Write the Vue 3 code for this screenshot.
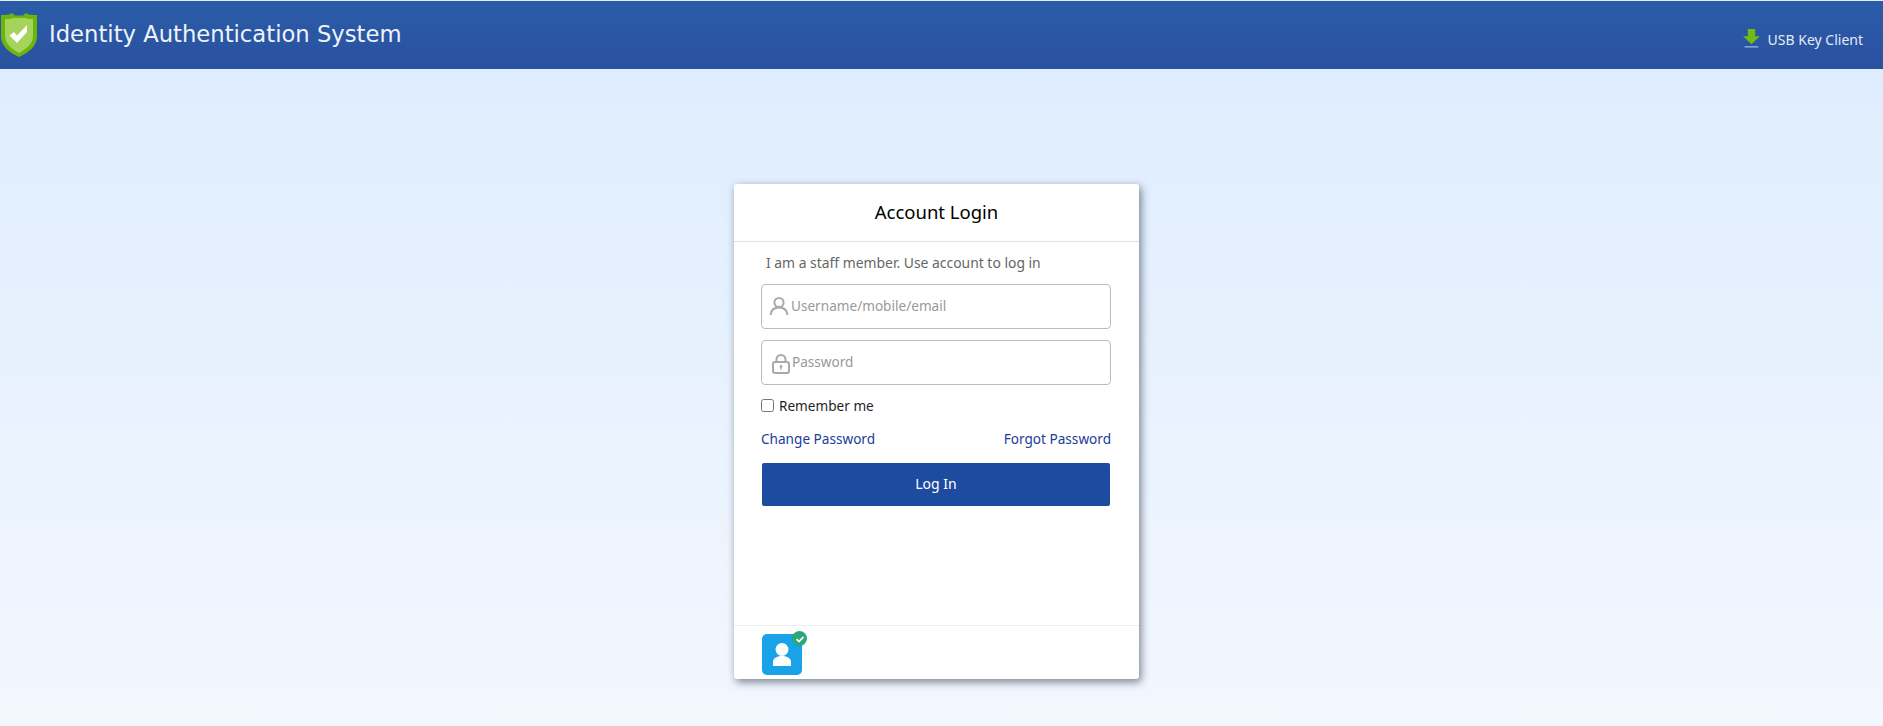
<script setup>
import { ref } from 'vue'

const remember = ref(false)
</script>

<template>
  <div class="page">
    <header class="topbar">
      <div class="brand">
        <svg class="shield" viewBox="0 0 38 46" width="38" height="46">
          <path d="M1 3 C6 3 9 3 12 1 L15 3.500 L23 3.500 L26 1 C29 3 32 3 37 3 L37 25 C37 34 28 41 19 45 C10 41 1 34 1 25 Z" fill="#6cb50f" />
          <path d="M5 7 C8 7 11 7 13 6 L25 6 C27 7 30 7 33 7 L33 24 C33 32 26 37 19 41 C12 37 5 32 5 24 Z" fill="#a5d35c" />
          <path d="M9.500 23.500 L14 20 L17 23.500 L27 13 L27 20 L17 31 Z" fill="#fff" />
        </svg>
        <span class="brand-name">Identity Authentication System</span>
      </div>
      <a class="client-link">
        <svg class="download" viewBox="0 0 16 19" width="17" height="20">
          <path d="M4.500 0 H11.500 V7 H16 L8 14.500 L0 7 H4.500 Z" fill="#72bb14" />
          <rect x="1.500" y="16.500" width="13" height="1" fill="#b9cbe6" />
        </svg>
        <span>USB Key Client</span>
      </a>
    </header>

    <main class="content">
      <section class="card">
        <h2 class="card-title">Account Login</h2>
        <div class="card-body">
          <p class="hint">I am a staff member. Use account to log in</p>
          <div class="field">
            <svg class="field-icon" viewBox="0 0 20 20" width="20" height="20">
              <circle cx="10" cy="6.500" r="4.600" fill="none" stroke="#a9a9a9" stroke-width="2" />
              <path d="M1.500 19 C2 14 5.500 11.500 10 11.500 C14.500 11.500 18 14 18.500 19" fill="none" stroke="#a9a9a9" stroke-width="2" />
            </svg>
            <span class="placeholder">Username/mobile/email</span>
          </div>
          <div class="field">
            <svg class="field-icon lock" viewBox="0 0 18 20" width="18" height="20">
              <path d="M4.500 9 V5.500 C4.500 3 6.500 1 9 1 C11.500 1 13.500 3 13.500 5.500 V9" fill="none" stroke="#a9a9a9" stroke-width="2" />
              <rect x="1" y="8" width="16" height="11" rx="2" fill="none" stroke="#a9a9a9" stroke-width="2" />
              <circle cx="9" cy="12.500" r="1.400" fill="#a9a9a9" />
              <rect x="8.400" y="12.500" width="1.200" height="3.500" fill="#a9a9a9" />
            </svg>
            <span class="placeholder">Password</span>
          </div>
          <label class="remember">
            <input v-model="remember" type="checkbox" />
            <span>Remember me</span>
          </label>
          <div class="links">
            <a>Change Password</a>
            <a>Forgot Password</a>
          </div>
          <button class="login-btn" type="button">Log In</button>
        </div>
        <footer class="card-footer">
          <div class="method">
            <svg viewBox="0 0 40 41" width="40" height="41">
              <circle cx="20" cy="15.500" r="6.500" fill="#fff" />
              <path d="M11 32 V28 C11 24.500 14.500 22 20 22 C25.500 22 29 24.500 29 28 V32 Z" fill="#fff" />
            </svg>
            <span class="check">
              <svg viewBox="0 0 14 14" width="14" height="14">
                <path d="M3.500 7.200 L6 9.500 L10.500 4.800" fill="none" stroke="#fff" stroke-width="1.800" />
              </svg>
            </span>
          </div>
        </footer>
      </section>
    </main>
  </div>
</template>

<style>
html,
body {
  margin: 0;
  background: #f3f7fe;
}
</style>

<style scoped>
.page {
  height: 726px;
  overflow: hidden;
  display: flex;
  flex-direction: column;
  font-family: "Noto Sans", "Liberation Sans", sans-serif;
  font-size: 13.6px;
  background: linear-gradient(#dcecfe, #f3f7fe);
}

.topbar {
  height: 68px;
  border-top: 1px solid #e4ecf5;
  display: flex;
  justify-content: space-between;
  background: linear-gradient(#2a5ca8, #2a519f);
  color: #fff;
}

.brand {
  display: flex;
  align-items: center;
  height: 68px;
}

.shield {
  flex: none;
  margin-top: -1px;
}

.brand-name {
  margin-left: 11px;
  margin-top: -2px;
  font-family: "DejaVu Sans", Verdana, sans-serif;
  font-size: 22.7px;
  color: #eef3fa;
}

.client-link {
  display: flex;
  align-items: center;
  gap: 8px;
  padding: 8px 20px 0 0;
  color: #e4ebf6;
  font-size: 14px;
}

.content {
  flex: 1;
  padding: 115px 10px 0 0;
  display: flex;
  justify-content: center;
}

.card {
  width: 405px;
  height: 495px;
  border-radius: 3px;
  background: #fff;
  box-shadow: 2px 3px 8px rgba(40, 50, 70, 0.6);
  display: flex;
  flex-direction: column;
}

.card-title {
  height: 57px;
  margin: 0;
  border-bottom: 1px solid #dddfe3;
  font-size: 18.5px;
  font-weight: 400;
  line-height: 56px;
  text-align: center;
  color: #000;
}

.card-body {
  flex: 1;
  padding: 0 28px 0 27px;
  display: flex;
  flex-direction: column;
}

.hint {
  margin: 9px 0 9px 5px;
  font-size: 13.9px;
  line-height: 24px;
  color: #666;
}

.field {
  height: 43px;
  margin-bottom: 11px;
  border: 1px solid #bcbcbc;
  border-radius: 4px;
  display: flex;
  align-items: center;
  padding-left: 7px;
  color: #999;
}

.field-icon {
  flex: none;
  margin: -2px 2px 0 0;
}

.field-icon.lock {
  margin: 2px 2px 0 3px;
}

.placeholder {
  line-height: 20px;
  margin-top: -2px;
}

.remember {
  display: flex;
  align-items: center;
  gap: 5px;
  height: 20px;
  margin-top: -1px;
  color: #1f1f1f;
}

.remember input {
  width: 13px;
  height: 13px;
  margin: 0;
}

.links {
  display: flex;
  justify-content: space-between;
  margin: 14px 0 14px;
  line-height: 20px;
  color: #1a3d96;
}

.login-btn {
  height: 43px;
  margin: 0 1px;
  padding: 0 0 2px;
  border: none;
  border-radius: 2px;
  background: #1d4b9f;
  color: #fff;
  font: inherit;
  font-size: 14px;
}

.card-footer {
  height: 54px;
  border-top: 1px solid #ecedf0;
  padding: 8px 0 0 28px;
  box-sizing: border-box;
}

.method {
  position: relative;
  width: 40px;
  height: 41px;
  border-radius: 5px;
  background: #18a3e8;
}

.check {
  position: absolute;
  top: -3px;
  right: -5px;
  width: 15px;
  height: 15px;
  border-radius: 50%;
  background: #2aa876;
  display: flex;
  align-items: center;
  justify-content: center;
}
</style>
